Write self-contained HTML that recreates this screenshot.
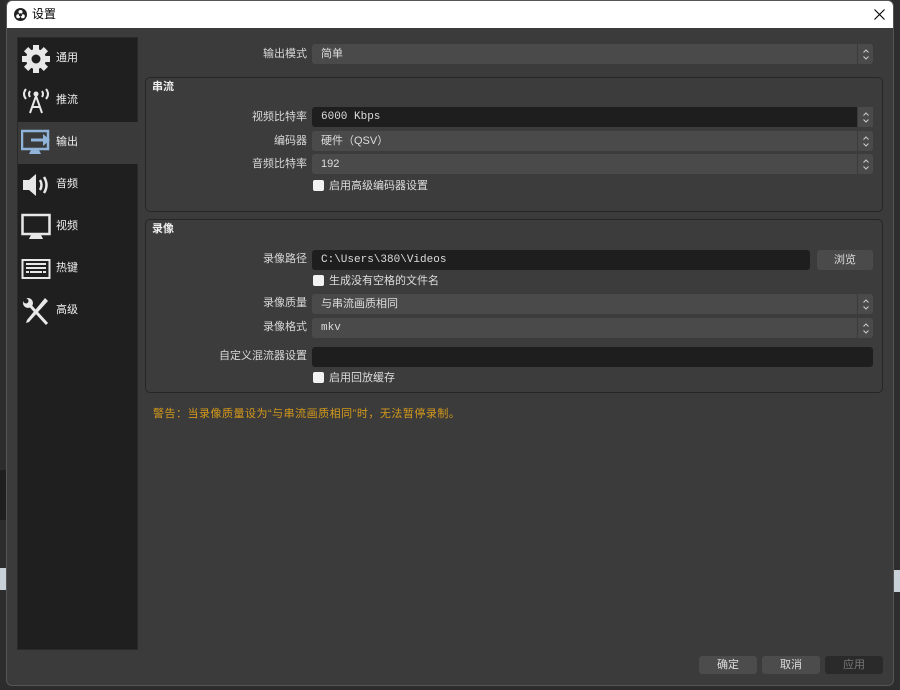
<!DOCTYPE html>
<html><head><meta charset="utf-8"><style>
*{margin:0;padding:0;box-sizing:border-box}
body{width:900px;height:690px;background:#2d2d2d;position:relative;overflow:hidden;font-family:"Liberation Sans","Noto Sans CJK SC",sans-serif;font-size:11px;line-height:14px;color:#dcdcdc}
.a{position:absolute}
#win{left:6px;top:0;width:888px;height:686px;background:#3b3b3b;border:1px solid #555;border-radius:6px;overflow:hidden}
#title{left:0;top:0;width:888px;height:27px;background:#fff;color:#000;font-size:12px}
.lbl{position:absolute;text-align:right;width:200px;color:#d8d8d8}
.box{position:absolute;background:#4a4a4a;border-radius:3px;height:20px;padding-left:9px;line-height:20px;color:#ddd}
.dark{background:#1e1e1e}
.arr{position:absolute;right:0;top:0;width:16px;height:100%;border-left:1px solid #3b3b3b}
.arr svg{position:absolute;left:4px;top:4px}
.grp{position:absolute;border:1px solid #262626;border-radius:5px;background:#3c3c3c}
.gt{position:absolute;left:6px;top:2px;font-weight:bold;color:#eee}
.cb{position:absolute;width:11px;height:11px;background:#f2f2f2;border-radius:2px}
.ct{position:absolute;color:#ddd}
.it{position:absolute;left:0;width:121px;height:42px}
.it span{position:absolute;left:38px;top:13px;color:#eee}
.it svg{position:absolute;left:3px;top:6px}
.btn{position:absolute;top:656px;width:58px;height:18px;border-radius:3px;background:#4c4c4c;text-align:center;line-height:18px;color:#ddd}
.mono{font-family:"Liberation Mono","Noto Sans CJK SC",monospace;font-size:11px}
</style></head><body>
<svg width="0" height="0" style="position:absolute"><defs><g id="ch"><path d="M1.5 4.5 L4 2 L6.5 4.5 M1.5 8.5 L4 11 L6.5 8.5" fill="none" stroke="#ccc" stroke-width="1"/></g></defs></svg>
<div class="a" style="left:0;top:470px;width:6px;height:50px;background:#1f1f1f"></div>
<div class="a" style="left:0;top:568px;width:6px;height:22px;background:#c8d0d8"></div>
<div class="a" style="left:894px;top:570px;width:6px;height:22px;background:#c8d0d8"></div>
<div id="win" class="a">
 <div id="title" class="a">
  <svg class="a" style="left:7px;top:7px" width="13" height="13" viewBox="0 0 13 13"><circle cx="6.5" cy="6.5" r="6.5" fill="#222"/><circle cx="6.5" cy="4" r="2" fill="#fff"/><circle cx="4.2" cy="8.2" r="2" fill="#fff"/><circle cx="8.8" cy="8.2" r="2" fill="#fff"/><circle cx="6.5" cy="6.8" r="1.6" fill="#222"/></svg>
  <span class="a" style="left:25px;top:6px">设置</span>
  <svg class="a" style="left:867px;top:8px" width="11" height="11" viewBox="0 0 11 11"><path d="M0.5 0.5 L10.5 10.5 M10.5 0.5 L0.5 10.5" stroke="#000" stroke-width="1.1"/></svg>
 </div>
</div>
<!-- sidebar -->
<div class="a" style="left:17px;top:37px;width:121px;height:613px;background:#1f1f1f;border:1px solid #2a2a2a">
 <div class="it" style="top:0"><svg width="30" height="30" viewBox="0 0 30 30"><g fill="#e8e8e8"><circle cx="15" cy="15" r="10"/><rect x="12" y="1" width="6" height="28"/><rect x="12" y="1" width="6" height="28" transform="rotate(45 15 15)"/><rect x="12" y="1" width="6" height="28" transform="rotate(90 15 15)"/><rect x="12" y="1" width="6" height="28" transform="rotate(135 15 15)"/></g><circle cx="15" cy="15" r="4.5" fill="#1f1f1f"/></svg><span>通用</span></div>
 <div class="it" style="top:42px"><svg width="30" height="32" viewBox="0 0 30 32"><g fill="none" stroke="#e8e8e8" stroke-width="2"><path d="M5 3 Q1 8 5 13"/><path d="M25 3 Q29 8 25 13"/><path d="M9 5 Q7 8 9 11"/><path d="M21 5 Q23 8 21 11"/><path d="M15 10 L9 27 M15 10 L21 27 M11 21 H19"/></g><circle cx="15" cy="8" r="2.5" fill="#e8e8e8"/></svg><span>推流</span></div>
 <div class="it" style="top:84px;background:#3a3a3a"><svg width="32" height="30" viewBox="0 0 32 30"><rect x="1" y="3" width="26" height="18" fill="none" stroke="#8fb3d9" stroke-width="2.5"/><path d="M10 12 H25" stroke="#8fb3d9" stroke-width="3"/><path d="M22 6 L29 12 L22 18 Z" fill="#8fb3d9"/><path d="M10 22 h8 l2 4 h-12z" fill="#8fb3d9"/></svg><span>输出</span></div>
 <div class="it" style="top:126px"><svg width="30" height="30" viewBox="0 0 30 30"><path d="M2 10 H8 L15 4 V26 L8 20 H2Z" fill="#e8e8e8"/><path d="M19 10 Q22 15 19 20 M23 7 Q28 15 23 23" stroke="#e8e8e8" stroke-width="2.5" fill="none"/></svg><span>音频</span></div>
 <div class="it" style="top:168px"><svg width="30" height="30" viewBox="0 0 30 30"><rect x="1.5" y="3" width="27" height="19" fill="none" stroke="#e8e8e8" stroke-width="2.5"/><path d="M10 23 h10 l2 4 h-14z" fill="#e8e8e8"/></svg><span>视频</span></div>
 <div class="it" style="top:210px"><svg width="30" height="30" viewBox="0 0 30 30"><rect x="1.5" y="6" width="27" height="18" fill="none" stroke="#e8e8e8" stroke-width="2"/><g fill="#e8e8e8"><rect x="5" y="9" width="20" height="2"/><rect x="5" y="13" width="20" height="2"/><rect x="5" y="17" width="3" height="2"/><rect x="9" y="17" width="12" height="2"/><rect x="22" y="17" width="3" height="2"/></g></svg><span>热键</span></div>
 <div class="it" style="top:252px"><svg width="30" height="32" viewBox="0 0 30 32"><path d="M4 4 L26 28" stroke="#e8e8e8" stroke-width="3"/><path d="M24 2 L27 5 L8 26 L5 27 L6 24Z" fill="#e8e8e8"/><circle cx="7" cy="7" r="5" fill="#e8e8e8"/><circle cx="5" cy="5" r="2.5" fill="#1f1f1f"/></svg><span>高级</span></div>
</div>
<!-- main -->
<div class="lbl" style="left:107px;top:47px">输出模式</div>
<div class="box" style="left:312px;top:44px;width:561px">简单<div class="arr"><svg width="8" height="13"><use href="#ch"/></svg></div></div>

<div class="grp" style="left:145px;top:77px;width:738px;height:135px"><div class="gt">串流</div></div>
<div class="lbl" style="left:107px;top:110px">视频比特率</div>
<div class="box dark mono" style="left:312px;top:107px;width:561px">6000 Kbps<div class="arr" style="background:#4a4a4a"><svg width="8" height="13"><use href="#ch"/></svg></div></div>
<div class="lbl" style="left:107px;top:134px">编码器</div>
<div class="box" style="left:312px;top:131px;width:561px">硬件（QSV）<div class="arr"><svg width="8" height="13"><use href="#ch"/></svg></div></div>
<div class="lbl" style="left:107px;top:157px">音频比特率</div>
<div class="box" style="left:312px;top:154px;width:561px">192<div class="arr"><svg width="8" height="13"><use href="#ch"/></svg></div></div>
<div class="cb" style="left:313px;top:180px"></div><div class="ct" style="left:329px;top:179px">启用高级编码器设置</div>

<div class="grp" style="left:145px;top:219px;width:738px;height:174px"><div class="gt">录像</div></div>
<div class="lbl" style="left:107px;top:252px">录像路径</div>
<div class="box dark mono" style="left:312px;top:250px;width:498px">C:\Users\380\Videos</div>
<div class="box" style="left:817px;top:250px;width:56px;padding:0;text-align:center">浏览</div>
<div class="cb" style="left:313px;top:275px"></div><div class="ct" style="left:329px;top:274px">生成没有空格的文件名</div>
<div class="lbl" style="left:107px;top:296px">录像质量</div>
<div class="box" style="left:312px;top:294px;width:561px">与串流画质相同<div class="arr"><svg width="8" height="13"><use href="#ch"/></svg></div></div>
<div class="lbl" style="left:107px;top:320px">录像格式</div>
<div class="box mono" style="left:312px;top:318px;width:561px">mkv<div class="arr"><svg width="8" height="13"><use href="#ch"/></svg></div></div>
<div class="lbl" style="left:107px;top:349px">自定义混流器设置</div>
<div class="box dark" style="left:312px;top:347px;width:561px"></div>
<div class="cb" style="left:313px;top:372px"></div><div class="ct" style="left:329px;top:371px">启用回放缓存</div>

<div class="a" style="left:153px;top:407px;color:#d4991a;letter-spacing:0.5px">警告：当录像质量设为“与串流画质相同”时，无法暂停录制。</div>

<div class="btn" style="left:699px">确定</div>
<div class="btn" style="left:762px">取消</div>
<div class="btn" style="left:825px;background:#2a2a2a;color:#777">应用</div>
</body></html>
